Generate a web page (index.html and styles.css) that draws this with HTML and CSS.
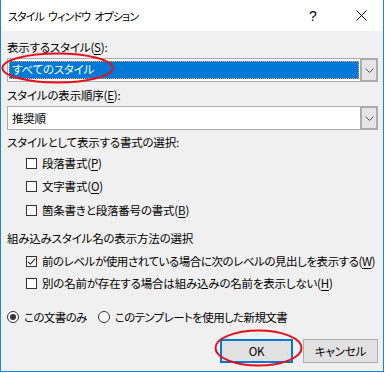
FILE: index.html
```html
<!DOCTYPE html>
<html lang="ja">
<head>
<meta charset="utf-8">
<title>スタイル ウィンドウ オプション</title>
<link rel="stylesheet" href="styles.css">
</head>
<body>
<div class="window">
  <div class="titlebar">
    <span class="title">スタイル ウィンドウ オプション</span>
    <span class="help">?</span>
    <span class="close"><svg width="11" height="11" viewBox="0 0 11 11"><path d="M0.5 0.5L10.5 10.5M10.5 0.5L0.5 10.5" stroke="#000" stroke-width="1" fill="none"/></svg></span>
  </div>
  <div class="body">
    <div class="label first">表示するスタイル(<u>S</u>):</div>
    <div class="combo">
      <div class="field"><span class="sel">すべてのスタイル</span></div>
      <div class="dropbtn"><svg width="9" height="5" viewBox="0 0 9 5"><path d="M0.5 0.5L4.5 4.5L8.5 0.5" stroke="#555" stroke-width="1" fill="none"/></svg></div>
    </div>
    <div class="label after-combo">スタイルの表示順序(<u>E</u>):</div>
    <div class="combo">
      <div class="field"><span class="val">推奨順</span></div>
      <div class="dropbtn"><svg width="9" height="5" viewBox="0 0 9 5"><path d="M0.5 0.5L4.5 4.5L8.5 0.5" stroke="#555" stroke-width="1" fill="none"/></svg></div>
    </div>
    <div class="label sec3">スタイルとして表示する書式の選択:</div>
    <div class="check c1"><span class="box"></span><span class="txt">段落書式(<u>P</u>)</span></div>
    <div class="check c2"><span class="box"></span><span class="txt">文字書式(<u>O</u>)</span></div>
    <div class="check c3"><span class="box"></span><span class="txt">箇条書きと段落番号の書式(<u>B</u>)</span></div>
    <div class="label sec4">組み込みスタイル名の表示方法の選択</div>
    <div class="check c4"><span class="box"><svg width="9" height="9" viewBox="0 0 9 9"><path d="M0.8 4.6L3.3 7.1L8.3 1.6" stroke="#333" stroke-width="1.1" fill="none"/></svg></span><span class="txt">前のレベルが使用されている場合に次のレベルの見出しを表示する(<u>W</u>)</span></div>
    <div class="check c5"><span class="box"></span><span class="txt">別の名前が存在する場合は組み込みの名前を表示しない(<u>H</u>)</span></div>
    <div class="radios">
      <div class="radio"><span class="circle on"></span><span class="txt">この文書のみ</span></div>
      <div class="radio second"><span class="circle"></span><span class="txt">このテンプレートを使用した新規文書</span></div>
    </div>
    <div class="buttons">
      <div class="btn ok">OK</div>
      <div class="btn cancel">キャンセル</div>
    </div>
  </div>
  <svg class="marks" width="385" height="373" viewBox="0 0 385 373">
    <ellipse cx="56.5" cy="68" rx="55" ry="14.5" fill="none" stroke="#e5101c" stroke-width="2"/>
    <ellipse cx="257.5" cy="348" rx="43" ry="17.5" fill="none" stroke="#e5101c" stroke-width="2"/>
  </svg>
</div>
</body>
</html>
```

FILE: styles.css
```css
html, body {
  margin: 0;
  padding: 0;
  background: #ffffff;
}
body {
  font-family: "Noto Sans CJK JP", "Noto Sans", sans-serif;
  font-size: 11.5px;
  letter-spacing: -0.2px;
  font-feature-settings: "palt";
  color: #000;
  white-space: nowrap;
}
u {
  text-decoration: underline;
  text-underline-offset: 2px;
}
.window {
  position: relative;
  width: 382px;
  height: 371px;
  border-left: 1px solid #1c84d6;
  border-right: 1px solid #1c84d6;
  border-bottom: 1px solid #1c84d6;
  background: #f0f0f0;
  display: flex;
  flex-direction: column;
}
.titlebar {
  height: 31px;
  background: #ffffff;
  display: flex;
  align-items: center;
  padding-left: 7px;
}
.title {
  flex: 1;
  line-height: 16px;
  font-size: 11px;
  letter-spacing: -0.9px;
  word-spacing: 2.5px;
}
.help {
  width: 10px;
  font-size: 14px;
  line-height: 16px;
  margin-right: 37px;
  font-family: "Liberation Sans", sans-serif;
}
.close {
  display: flex;
  margin-right: 16px;
}
.body {
  padding: 8px 5px 0 6px;
  display: flex;
  flex-direction: column;
}
.label {
  line-height: 16px;
  height: 16px;
}
.after-combo { margin-top: 5px; }
.combo {
  margin-top: 3px;
  height: 24px;
  width: 371px;
  flex-shrink: 0;
  display: flex;
  box-sizing: border-box;
}
.field {
  flex: 1;
  background: #fff;
  border: 1px solid #adadad;
  border-right: none;
  padding: 2px 1px 2px 1px;
  display: flex;
}
.sel {
  flex: 1;
  background: #0078d7;
  color: #fff;
  line-height: 16px;
  padding-left: 3px;
  outline: 1px dotted #f2a541;
  outline-offset: -1px;
}
.val {
  line-height: 18px;
  padding-left: 3px;
}
.dropbtn {
  width: 14px;
  background: #e5e5e5;
  border: 2px solid #adadad;
  display: flex;
  align-items: center;
  justify-content: center;
}
.sec3 { margin-top: 4px; }
.check {
  display: flex;
  align-items: center;
  height: 16px;
  line-height: 16px;
  padding-left: 19px;
}
.txt { flex-shrink: 0; }
.c1 { margin-top: 5px; }
.c2 { margin-top: 7px; }
.c3 { margin-top: 8px; }
.sec4 { margin-top: 12px; }
.c4 { margin-top: 7px; letter-spacing: -0.45px; }
.c5 { margin-top: 6px; }
.box {
  flex-shrink: 0;
  width: 11px;
  height: 11px;
  box-sizing: border-box;
  border: 1px solid #333;
  background: #fff;
  margin-right: 5px;
  display: flex;
  align-items: center;
  justify-content: center;
}
.radios {
  margin-top: 18px;
  display: flex;
  height: 16px;
  line-height: 16px;
  letter-spacing: -0.6px;
}
.radio {
  display: flex;
  align-items: center;
}
.radio.second { margin-left: 11px; }
.circle {
  flex-shrink: 0;
  width: 12px;
  height: 12px;
  box-sizing: border-box;
  border: 1px solid #333;
  border-radius: 50%;
  background: #fff;
  margin-right: 5px;
  display: flex;
  align-items: center;
  justify-content: center;
}
.circle.on::after {
  content: "";
  width: 6px;
  height: 6px;
  border-radius: 50%;
  background: #333;
}
.buttons {
  margin-top: 14px;
  display: flex;
  justify-content: flex-end;
  gap: 10px;
}
.btn {
  height: 24px;
  box-sizing: border-box;
  background: #e1e1e1;
  border: 1px solid #adadad;
  display: flex;
  align-items: center;
  justify-content: center;
  font-size: 11.5px;
}
.ok {
  width: 73px;
  border: 2px solid #0078d7;
}
.cancel {
  width: 75px;
}
.marks {
  position: absolute;
  left: 0;
  top: 0;
  pointer-events: none;
}
```
